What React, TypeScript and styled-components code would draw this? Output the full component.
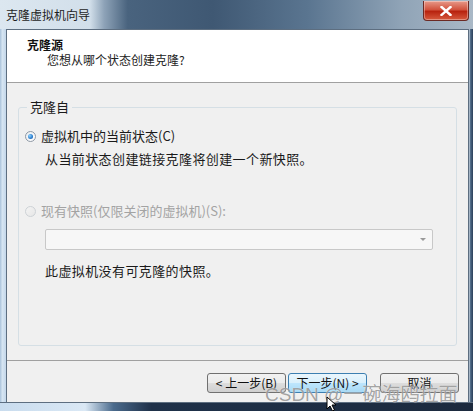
import styled, { createGlobalStyle } from 'styled-components';

const GlobalStyle = createGlobalStyle`
  html, body {
    margin: 0;
    padding: 0;
    background: #1c2a3e;
  }
  body {
    font-family: 'Noto Sans CJK SC', 'Noto Sans', sans-serif;
    overflow: hidden;
  }
`;

const Screen = styled.div`
  position: relative;
  width: 473px;
  height: 411px;
  overflow: hidden;
`;

const Window = styled.div`
  display: flex;
  flex-direction: column;
  width: 473px;
  height: 411px;
`;

const TitleBar = styled.div`
  display: flex;
  align-items: flex-start;
  justify-content: space-between;
  height: 29px;
  background: linear-gradient(
    90deg,
    #dce7f0 0%,
    #d2dfea 19%,
    #8ea3b8 22%,
    #49637e 27%,
    #3f5873 45%,
    #5a7590 65%,
    #90a4b7 85%,
    #a9b8c6 100%
  );
`;

const TitleText = styled.span`
  margin: 7px 0 0 6px;
  font-size: 12px;
  line-height: 16px;
  color: #1e1e1e;
`;

const CloseButton = styled.div`
  display: flex;
  align-items: center;
  justify-content: center;
  width: 44px;
  height: 19px;
  margin: 1px 4px 0 0;
  border: 1px solid #6b2a24;
  border-top: none;
  border-radius: 0 0 4px 4px;
  background: linear-gradient(180deg, #e79a8a 0%, #d2533e 45%, #b8230f 55%, #d75a3e 100%);
  box-shadow: inset 0 0 0 1px rgba(255, 255, 255, 0.35);
`;

const Middle = styled.div`
  display: flex;
  flex: 1;
  min-height: 0;
`;

const SideFrame = styled.div<{ $side: 'left' | 'right' }>`
  width: ${(p) => (p.$side === 'left' ? '6px' : '4px')};
  background: ${(p) =>
    p.$side === 'left'
      ? 'linear-gradient(90deg, #a9c2da 0%, #d6e5f2 40%, #c4d7ea 100%)'
      : 'linear-gradient(90deg, #cfdae5 0%, #4a6582 40%, #2c405a 100%)'};
`;

const BottomFrame = styled.div`
  height: 8px;
  background: linear-gradient(
    90deg,
    #c9dcee 0%,
    #dae8f5 18%,
    #4a6a8c 24%,
    #1f3149 32%,
    #1c2a3e 100%
  );
  border-top: 1px solid #5d6e80;
`;

const Panel = styled.div`
  display: flex;
  flex: 1;
  flex-direction: column;
  border: 1px solid #5d6e80;
  border-bottom: none;
  background: #f0f0f0;
`;

const Header = styled.div`
  display: flex;
  flex-direction: column;
  height: 53px;
  padding: 7px 0 0 20px;
  box-sizing: border-box;
  background: #fff;
  border-bottom: 1px solid #a0a0a0;
`;

const HeaderTitle = styled.span`
  font-size: 12px;
  line-height: 15px;
  font-weight: 700;
  color: #111;
`;

const HeaderSub = styled.span`
  margin-left: 20px;
  font-size: 12px;
  line-height: 15px;
  color: #222;
`;

const Body = styled.div`
  display: flex;
  flex: 1;
  flex-direction: column;
  padding: 16px 11px 14px 11px;
`;

const Group = styled.fieldset`
  flex: 1;
  display: flex;
  flex-direction: column;
  margin: 0;
  padding: 0 0 0 6px;
  min-width: 0;
  border: 1px solid #d5dfe5;
  border-radius: 3px;
`;

const Legend = styled.legend`
  margin-left: 2px;
  padding: 0 3px;
  font-size: 13px;
  line-height: 16px;
  color: #1a1a1a;
`;

const RadioRow = styled.div<{ $gap: number; $disabled?: boolean }>`
  display: flex;
  align-items: center;
  gap: 5px;
  margin-top: ${(p) => p.$gap}px;
  height: 16px;
  font-size: 13px;
  line-height: 16px;
  color: ${(p) => (p.$disabled ? '#a3a3a3' : '#1a1a1a')};
`;

const Radio = styled.span<{ $checked?: boolean; $disabled?: boolean }>`
  position: relative;
  width: 11px;
  height: 11px;
  border-radius: 50%;
  border: 1px solid ${(p) => (p.$disabled ? '#cdd2d6' : '#8e99a5')};
  background: ${(p) =>
    p.$disabled ? 'linear-gradient(135deg, #f4f4f4, #e6e6e6)' : 'linear-gradient(135deg, #e9edf1, #ffffff)'};
  box-sizing: border-box;
  &::after {
    content: '';
    display: ${(p) => (p.$checked ? 'block' : 'none')};
    position: absolute;
    left: 2px;
    top: 2px;
    width: 5px;
    height: 5px;
    border-radius: 50%;
    background: radial-gradient(circle at 35% 35%, #8fd3ff 0%, #2a7ccc 60%, #154f94 100%);
  }
`;

const Note = styled.div<{ $gap: number }>`
  margin: ${(p) => p.$gap}px 0 0 20px;
  font-size: 13px;
  line-height: 16px;
  letter-spacing: 0.4px;
  color: #1a1a1a;
`;

const Select = styled.div`
  display: flex;
  align-items: center;
  justify-content: flex-end;
  width: 388px;
  height: 21px;
  margin: 10px 0 0 20px;
  padding-right: 6px;
  box-sizing: border-box;
  border: 1px solid #c8c8c8;
  border-radius: 2px;
  background: #f7f7f7;
`;

const Caret = styled.span`
  width: 0;
  height: 0;
  border-left: 3px solid transparent;
  border-right: 3px solid transparent;
  border-top: 3px solid #9a9a9a;
`;

const Footer = styled.div`
  display: flex;
  justify-content: flex-end;
  align-items: flex-start;
  height: 42px;
  padding: 12px 9px 0 0;
  box-sizing: border-box;
  border-top: 1px solid #a0a0a0;
`;

const Button = styled.div<{ $primary?: boolean; $space?: number }>`
  display: flex;
  align-items: center;
  justify-content: center;
  width: 79px;
  height: 20px;
  margin-left: ${(p) => p.$space ?? 0}px;
  box-sizing: border-box;
  border: 1px solid ${(p) => (p.$primary ? '#3c7fb1' : '#707070')};
  border-radius: 3px;
  background: ${(p) =>
    p.$primary
      ? 'linear-gradient(180deg, #eaf6fd 0%, #d9f0fc 50%, #bee6fd 51%, #a7d9f5 100%)'
      : 'linear-gradient(180deg, #f2f2f2 0%, #ebebeb 50%, #dddddd 51%, #cfcfcf 100%)'};
  font-size: 12px;
  line-height: 14px;
  color: #111;
  white-space: pre;
`;

const Watermark = styled.span`
  position: absolute;
  left: 265px;
  top: 385px;
  font-family: 'Liberation Sans', 'Noto Sans CJK SC', sans-serif;
  font-size: 19px;
  line-height: 20px;
  color: rgba(105, 105, 105, 0.62);
  text-shadow: 0 0 1px rgba(255, 255, 255, 0.9);
  white-space: nowrap;
  pointer-events: none;
`;

const Cursor = styled.svg`
  position: absolute;
  left: 326px;
  top: 396px;
`;

export default function App() {
  return (
    <>
      <GlobalStyle />
      <Screen>
        <Window>
          <TitleBar>
            <TitleText>克隆虚拟机向导</TitleText>
            <CloseButton>
              <svg width='12' height='10' viewBox='0 0 12 10'>
                <path d='M1.5 1 L10.5 9 M10.5 1 L1.5 9' stroke='#fff' strokeWidth='2.4' strokeLinecap='square' />
              </svg>
            </CloseButton>
          </TitleBar>
          <Middle>
            <SideFrame $side='left' />
            <Panel>
              <Header>
                <HeaderTitle>克隆源</HeaderTitle>
                <HeaderSub>您想从哪个状态创建克隆?</HeaderSub>
              </Header>
              <Body>
                <Group>
                  <Legend>克隆自</Legend>
                  <RadioRow $gap={13}>
                    <Radio $checked />
                    虚拟机中的当前状态(C)
                  </RadioRow>
                  <Note $gap={7}>从当前状态创建链接克隆将创建一个新快照。</Note>
                  <RadioRow $gap={36} $disabled>
                    <Radio $disabled />
                    现有快照(仅限关闭的虚拟机)(S):
                  </RadioRow>
                  <Select>
                    <Caret />
                  </Select>
                  <Note $gap={13}>此虚拟机没有可克隆的快照。</Note>
                </Group>
              </Body>
              <Footer>
                <Button>{'< 上一步(B)'}</Button>
                <Button $primary $space={2}>
                  {'下一步(N) >'}
                </Button>
                <Button $space={13}>取消</Button>
              </Footer>
            </Panel>
            <SideFrame $side='right' />
          </Middle>
          <BottomFrame />
        </Window>
        <Watermark>CSDN @一碗海鸥拉面</Watermark>
        <Cursor width='12' height='16' viewBox='0 0 12 16'>
          <path d='M1 1 L1 13 L4 10 L6.5 15 L8.5 14 L6 9 L10 9 Z' fill='#fff' stroke='#000' strokeWidth='1' />
        </Cursor>
      </Screen>
    </>
  );
}
